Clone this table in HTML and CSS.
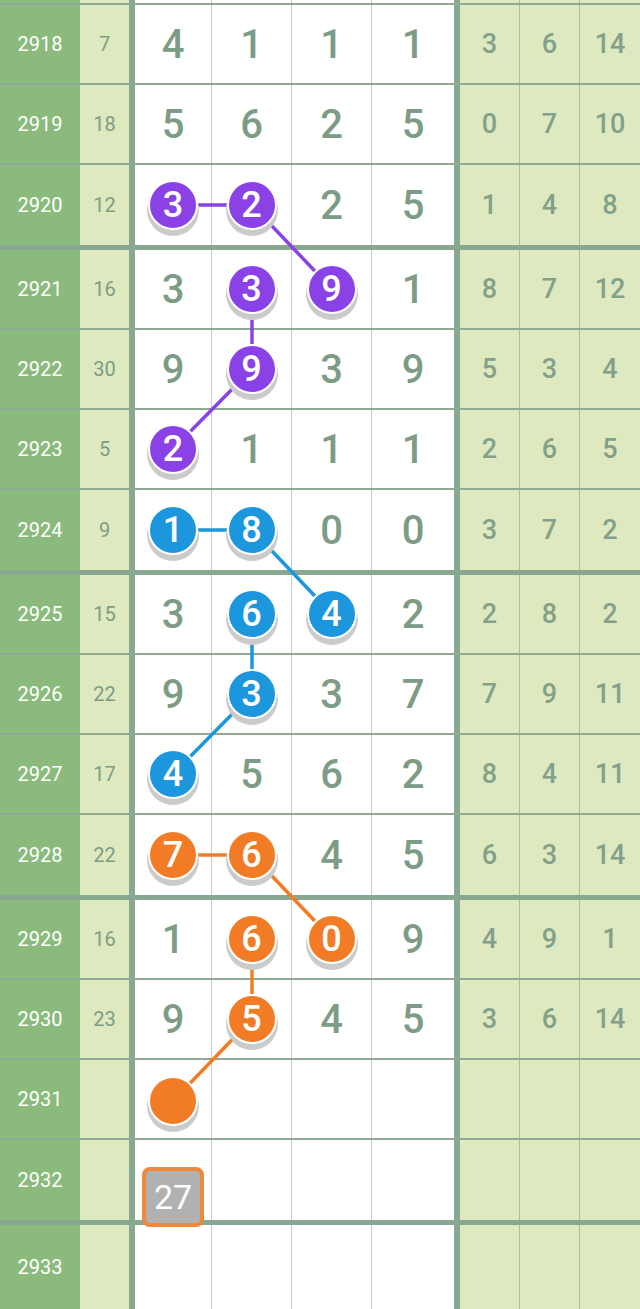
FILE: index.html
```html
<!DOCTYPE html>
<html lang="zh">
<head>
    <meta charset="UTF-8">
    <meta name="viewport" content="width=device-width, initial-scale=1.0">
    <title>走势图</title>
    <link rel="stylesheet" href="styles.css">
</head>
<body>
    <div class="board">
        <svg class="links" width="640" height="1309" viewBox="0 0 640 1309">
            <g class="purple">
                <line x1="173" y1="205" x2="252" y2="205"/>
                <line x1="252" y1="205" x2="332" y2="289"/>
                <line x1="252" y1="289" x2="252" y2="369"/>
                <line x1="252" y1="369" x2="173" y2="449"/>
            </g>
            <g class="blue">
                <line x1="173" y1="530" x2="252" y2="530"/>
                <line x1="252" y1="530" x2="332" y2="614"/>
                <line x1="252" y1="614" x2="252" y2="694"/>
                <line x1="252" y1="694" x2="173" y2="774"/>
            </g>
            <g class="orange">
                <line x1="173" y1="855" x2="252" y2="855"/>
                <line x1="252" y1="855" x2="332" y2="939"/>
                <line x1="252" y1="939" x2="252" y2="1019"/>
                <line x1="252" y1="1019" x2="173" y2="1101"/>
            </g>
        </svg>

        <div class="row top">
            <div class="no"></div><div class="sum"></div>
            <div class="d"></div><div class="d"></div><div class="d"></div><div class="d d4"></div>
            <div class="r"></div><div class="r"></div><div class="r last"></div>
        </div>

        <div class="row">
            <div class="no">2918</div><div class="sum">7</div>
            <div class="d">4</div><div class="d">1</div><div class="d">1</div><div class="d d4">1</div>
            <div class="r">3</div><div class="r">6</div><div class="r last">14</div>
        </div>
        <div class="row">
            <div class="no">2919</div><div class="sum">18</div>
            <div class="d">5</div><div class="d">6</div><div class="d">2</div><div class="d d4">5</div>
            <div class="r">0</div><div class="r">7</div><div class="r last">10</div>
        </div>
        <div class="row end">
            <div class="no">2920</div><div class="sum">12</div>
            <div class="d"><span class="ball purple">3</span></div><div class="d"><span class="ball purple">2</span></div><div class="d">2</div><div class="d d4">5</div>
            <div class="r">1</div><div class="r">4</div><div class="r last">8</div>
        </div>

        <div class="row">
            <div class="no">2921</div><div class="sum">16</div>
            <div class="d">3</div><div class="d"><span class="ball purple">3</span></div><div class="d"><span class="ball purple">9</span></div><div class="d d4">1</div>
            <div class="r">8</div><div class="r">7</div><div class="r last">12</div>
        </div>
        <div class="row">
            <div class="no">2922</div><div class="sum">30</div>
            <div class="d">9</div><div class="d"><span class="ball purple">9</span></div><div class="d">3</div><div class="d d4">9</div>
            <div class="r">5</div><div class="r">3</div><div class="r last">4</div>
        </div>
        <div class="row">
            <div class="no">2923</div><div class="sum">5</div>
            <div class="d"><span class="ball purple">2</span></div><div class="d">1</div><div class="d">1</div><div class="d d4">1</div>
            <div class="r">2</div><div class="r">6</div><div class="r last">5</div>
        </div>
        <div class="row end">
            <div class="no">2924</div><div class="sum">9</div>
            <div class="d"><span class="ball blue">1</span></div><div class="d"><span class="ball blue">8</span></div><div class="d">0</div><div class="d d4">0</div>
            <div class="r">3</div><div class="r">7</div><div class="r last">2</div>
        </div>

        <div class="row">
            <div class="no">2925</div><div class="sum">15</div>
            <div class="d">3</div><div class="d"><span class="ball blue">6</span></div><div class="d"><span class="ball blue">4</span></div><div class="d d4">2</div>
            <div class="r">2</div><div class="r">8</div><div class="r last">2</div>
        </div>
        <div class="row">
            <div class="no">2926</div><div class="sum">22</div>
            <div class="d">9</div><div class="d"><span class="ball blue">3</span></div><div class="d">3</div><div class="d d4">7</div>
            <div class="r">7</div><div class="r">9</div><div class="r last">11</div>
        </div>
        <div class="row">
            <div class="no">2927</div><div class="sum">17</div>
            <div class="d"><span class="ball blue">4</span></div><div class="d">5</div><div class="d">6</div><div class="d d4">2</div>
            <div class="r">8</div><div class="r">4</div><div class="r last">11</div>
        </div>
        <div class="row end">
            <div class="no">2928</div><div class="sum">22</div>
            <div class="d"><span class="ball orange">7</span></div><div class="d"><span class="ball orange">6</span></div><div class="d">4</div><div class="d d4">5</div>
            <div class="r">6</div><div class="r">3</div><div class="r last">14</div>
        </div>

        <div class="row">
            <div class="no">2929</div><div class="sum">16</div>
            <div class="d">1</div><div class="d"><span class="ball orange">6</span></div><div class="d"><span class="ball orange">0</span></div><div class="d d4">9</div>
            <div class="r">4</div><div class="r">9</div><div class="r last">1</div>
        </div>
        <div class="row">
            <div class="no">2930</div><div class="sum">23</div>
            <div class="d">9</div><div class="d"><span class="ball orange">5</span></div><div class="d">4</div><div class="d d4">5</div>
            <div class="r">3</div><div class="r">6</div><div class="r last">14</div>
        </div>
        <div class="row">
            <div class="no">2931</div><div class="sum"></div>
            <div class="d"><span class="ball orange low"></span></div><div class="d"></div><div class="d"></div><div class="d d4"></div>
            <div class="r"></div><div class="r"></div><div class="r last"></div>
        </div>
        <div class="row end">
            <div class="no">2932</div><div class="sum"></div>
            <div class="d"><span class="pick">27</span></div><div class="d"></div><div class="d"></div><div class="d d4"></div>
            <div class="r"></div><div class="r"></div><div class="r last"></div>
        </div>

        <div class="row bottom">
            <div class="no">2933</div><div class="sum"></div>
            <div class="d"></div><div class="d"></div><div class="d"></div><div class="d d4"></div>
            <div class="r"></div><div class="r"></div><div class="r last"></div>
        </div>
    </div>
</body>
</html>
```

FILE: styles.css
```css
body {
    margin: 0;
    background-color: #ffffff;
    font-family: Roboto, "Noto Sans", sans-serif;
}
.board {
    position: relative;
    width: 640px;
    height: 1309px;
    overflow: hidden;
}
.links {
    position: absolute;
    top: 0;
    left: 0;
    z-index: 1;
}
.links line {
    stroke-width: 3.5;
}
.links .purple line {
    stroke: #8a42e6;
}
.links .blue line {
    stroke: #1c97dd;
}
.links .orange line {
    stroke: #f27c26;
}
.row {
    display: grid;
    grid-template-columns: 80px 55px 77px 80px 80px 88px 60px 60px 60px;
    height: 80px;
    box-sizing: border-box;
    border-bottom: 2px solid #8fa997;
}
.row.top {
    height: 5px;
}
.row.end {
    height: 85px;
    border-bottom-width: 5px;
    border-bottom-color: #89a891;
}
.row.bottom {
    height: 84px;
    border-bottom: none;
}
.row > div {
    display: flex;
    align-items: center;
    justify-content: center;
    box-sizing: border-box;
}
.no {
    background-color: #8aba7c;
    color: #ffffff;
    font-size: 20px;
    font-weight: 400;
}
.sum {
    background-color: #dfe9bf;
    border-right: 6px solid #89a891;
    color: #7c9c86;
    font-size: 20px;
}
.d {
    background-color: #ffffff;
    border-right: 1px solid #c3cec6;
    color: #7c9c86;
    font-size: 40px;
    font-weight: 500;
}
.d.d4 {
    border-right: 6px solid #89a891;
}
.r {
    background-color: #dfe9bf;
    border-right: 1px solid #adbf98;
    color: #82a08a;
    font-size: 27px;
    font-weight: 500;
}
.r.last {
    border-right: none;
}
.ball {
    position: relative;
    z-index: 2;
    width: 46px;
    height: 46px;
    border: 2px solid #ffffff;
    border-radius: 50%;
    display: flex;
    align-items: center;
    justify-content: center;
    color: #ffffff;
    font-size: 36px;
    font-weight: 500;
    box-shadow: 0 5px 0 1px #cbcbcb;
}
.ball.low {
    margin-top: 4px;
}
.ball.purple {
    background-color: #8a42e6;
}
.ball.blue {
    background-color: #1c97dd;
}
.ball.orange {
    background-color: #f27c26;
}
.pick {
    position: relative;
    z-index: 2;
    align-self: end;
    margin-bottom: -7px;
    width: 62px;
    height: 60px;
    box-sizing: border-box;
    border: 4px solid #f0893a;
    border-radius: 8px;
    background-color: #b1b1b1;
    color: #ffffff;
    font-size: 34px;
    font-weight: 400;
    display: flex;
    align-items: center;
    justify-content: center;
}
```
